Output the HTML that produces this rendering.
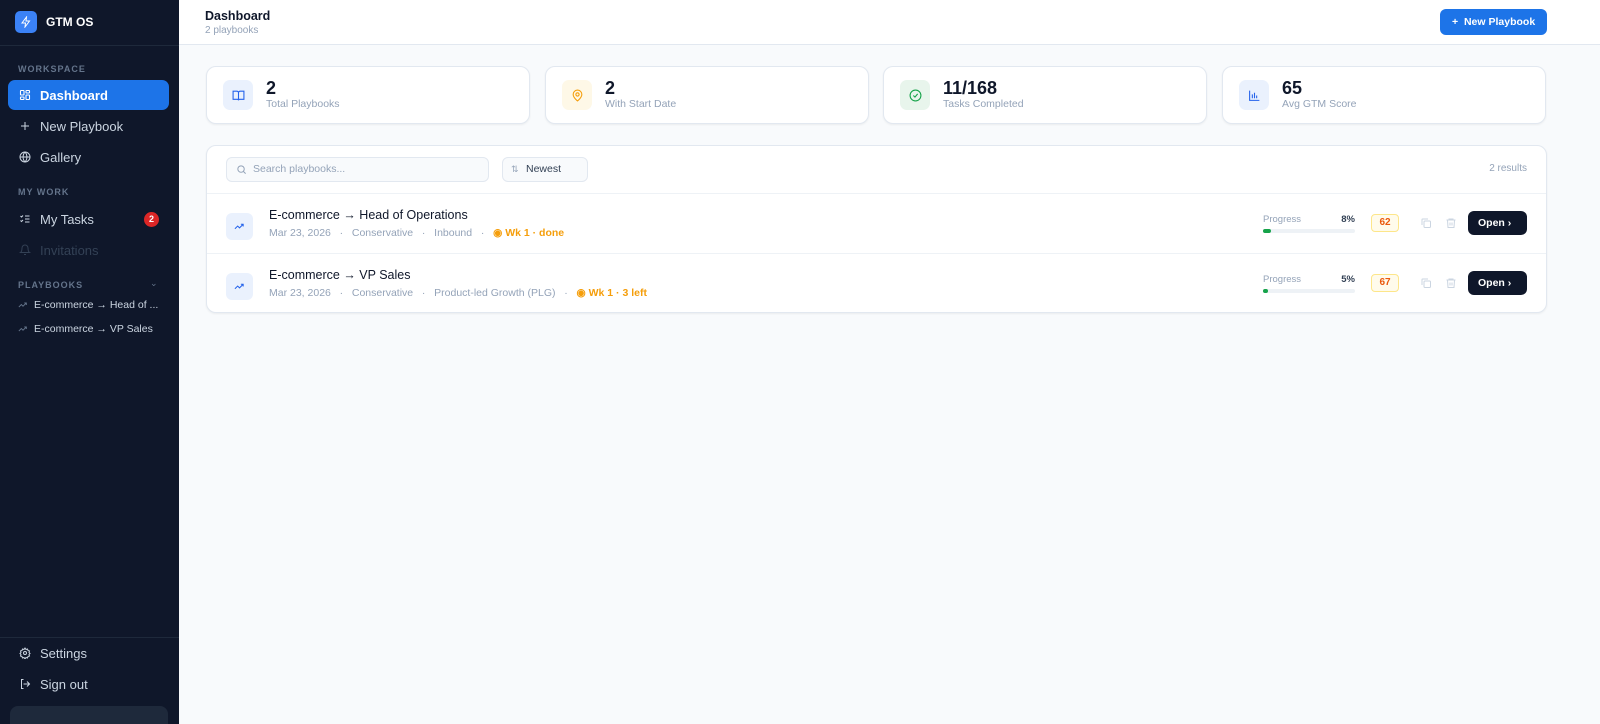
<!DOCTYPE html>
<html><head><meta charset="utf-8"><style>
*{box-sizing:border-box;margin:0;padding:0}
html,body{width:1600px;height:724px;overflow:hidden}
body{font-family:"Liberation Sans",sans-serif;background:#f8fafc;position:relative}
.sb{position:absolute;left:0;top:0;width:179px;height:724px;background:#0f172a;color:#cbd5e1;overflow:hidden}
.logo{position:absolute;left:15px;top:11px;width:22px;height:22px;border-radius:5px;background:#3b82f6;display:flex;align-items:center;justify-content:center}
.brand{position:absolute;left:46px;top:15px;font-size:12px;font-weight:bold;color:#fff}
.sec{position:absolute;left:18px;font-size:9px;font-weight:bold;letter-spacing:1px;color:#64748b}
.it{position:absolute;left:8px;width:161px;height:30px;border-radius:7px;display:flex;align-items:center;padding-left:11px;font-size:13px;color:#cbd5e1}
.it svg{margin-right:9px}
.act{background:#1d74e8;color:#fff;font-weight:bold}
.pb{position:absolute;left:18px;font-size:10.5px;color:#cbd5e1;display:flex;align-items:center}
.hdr{position:absolute;left:179px;top:0;right:0;height:45px;background:#fff;border-bottom:1px solid #e2e8f0}
.card{position:absolute;top:66px;height:58px;width:324px;background:#fff;border:1px solid #e2e8f0;border-radius:10px;box-shadow:0 1px 2px rgba(0,0,0,.06)}
.ic{position:absolute;left:16px;top:13px;width:30px;height:30px;border-radius:7px;display:flex;align-items:center;justify-content:center}
.num{position:absolute;left:59px;top:11px;font-size:18px;font-weight:bold;color:#0f172a}
.lbl{position:absolute;left:59px;top:31px;font-size:10.5px;color:#94a3b8}
.list{position:absolute;left:206px;top:145px;width:1341px;height:168px;background:#fff;border:1px solid #e2e8f0;border-radius:10px;box-shadow:0 1px 2px rgba(0,0,0,.06)}
.row{position:absolute;left:0;width:100%;height:60px;border-top:1px solid #eef2f6}
.ri{position:absolute;left:19px;top:19px;width:27px;height:27px;border-radius:6px;background:#eaf1fd;display:flex;align-items:center;justify-content:center}
.t{position:absolute;left:62px;top:14px;font-size:12.5px;color:#0f172a}
.m{position:absolute;left:62px;top:33px;font-size:10.5px;color:#94a3b8;white-space:pre}
.m b{color:#f59e0b}
.pg{position:absolute;left:1056px;top:20px;font-size:9.5px;color:#94a3b8;width:92px}
.pg span{position:absolute;right:0;color:#334155;font-weight:bold}
.bar{position:absolute;left:1056px;top:35px;width:92px;height:4px;border-radius:2px;background:#eef2f6}
.bar i{display:block;height:4px;border-radius:2px;background:#16a34a}
.sc{position:absolute;left:1164px;top:20px;width:28px;height:18px;border:1px solid #fde68a;background:#fffbeb;border-radius:4px;color:#ea580c;font-size:10px;font-weight:bold;text-align:center;line-height:16px}
.open{position:absolute;left:1261px;top:17px;width:59px;height:24px;border-radius:6px;background:#0f172a;color:#fff;font-size:10.5px;font-weight:bold;line-height:24px;padding-left:10px}
.cp{position:absolute;left:1213px;top:23px}
.tr{position:absolute;left:1238px;top:23px}
</style></head><body>
<div class="sb">
<div class="logo"><svg width="12" height="12" viewBox="0 0 24 24" fill="none" stroke="#fff" stroke-width="2"><path d="M13 2L4 14h7l-1 8 9-12h-7z"/></svg></div>
<div class="brand">GTM OS</div>
<div style="position:absolute;left:0;top:45px;width:179px;border-top:1px solid #1e293b"></div>
<div class="sec" style="top:64px">WORKSPACE</div>
<div class="it act" style="top:80px"><svg width="12" height="12" viewBox="0 0 24 24" fill="none" stroke="#fff" stroke-width="2.2"><rect x="3" y="3" width="7" height="9" rx="1"/><rect x="14" y="3" width="7" height="5" rx="1"/><rect x="14" y="12" width="7" height="9" rx="1"/><rect x="3" y="16" width="7" height="5" rx="1"/></svg>Dashboard</div>
<div class="it" style="top:111px"><svg width="12" height="12" viewBox="0 0 24 24" fill="none" stroke="#cbd5e1" stroke-width="2"><path d="M12 4v16M4 12h16"/></svg>New Playbook</div>
<div class="it" style="top:142px"><svg width="12" height="12" viewBox="0 0 24 24" fill="none" stroke="#cbd5e1" stroke-width="2"><circle cx="12" cy="12" r="10"/><path d="M2 12h20M12 2a15 15 0 010 20M12 2a15 15 0 000 20"/></svg>Gallery</div>
<div class="sec" style="top:187px">MY WORK</div>
<div class="it" style="top:204px"><svg width="12" height="12" viewBox="0 0 24 24" fill="none" stroke="#cbd5e1" stroke-width="2"><path d="M3 6l2 2 3-3M3 15l2 2 3-3M12 6h9M12 12h9M12 18h9"/></svg>My Tasks<span style="position:absolute;right:10px;width:15px;height:15px;border-radius:50%;background:#dc2626;color:#fff;font-size:9px;font-weight:bold;text-align:center;line-height:15px">2</span></div>
<div class="it" style="top:235px;color:#334155"><svg width="12" height="12" viewBox="0 0 24 24" fill="none" stroke="#334155" stroke-width="2"><path d="M6 8a6 6 0 0112 0c0 7 3 9 3 9H3s3-2 3-9M10 21h4"/></svg>Invitations</div>
<div class="sec" style="top:280px">PLAYBOOKS</div>
<div style="position:absolute;left:150px;top:278px;color:#64748b;font-size:9px">⌄</div>
<div class="pb" style="top:299px"><svg width="10" height="10" viewBox="0 0 24 24" fill="none" stroke="#64748b" stroke-width="2.2" style="margin-right:6px"><path d="M2 17l6-6 4 4 8-8M15 7h5v5"/></svg>E-commerce → Head of ...</div>
<div class="pb" style="top:323px"><svg width="10" height="10" viewBox="0 0 24 24" fill="none" stroke="#64748b" stroke-width="2.2" style="margin-right:6px"><path d="M2 17l6-6 4 4 8-8M15 7h5v5"/></svg>E-commerce → VP Sales</div>
<div style="position:absolute;left:0;top:637px;width:179px;border-top:1px solid #1e293b"></div>
<div class="it" style="top:638px"><svg width="12" height="12" viewBox="0 0 24 24" fill="none" stroke="#cbd5e1" stroke-width="2"><circle cx="12" cy="12" r="3"/><path d="M12 2l2 3 3-1 1 3 3 1-1 3 2 2-2 2 1 3-3 1-1 3-3-1-2 3-2-3-3 1-1-3-3-1 1-3-2-2 2-2-1-3 3-1 1-3 3 1z"/></svg>Settings</div>
<div class="it" style="top:669px"><svg width="12" height="12" viewBox="0 0 24 24" fill="none" stroke="#cbd5e1" stroke-width="2"><path d="M9 21H5V3h4M16 17l5-5-5-5M21 12H9"/></svg>Sign out</div>
<div style="position:absolute;left:10px;top:706px;width:158px;height:30px;border-radius:8px;background:#1e293b"></div>
</div>
<div class="hdr">
<div style="position:absolute;left:26px;top:9px;font-size:12.5px;font-weight:bold;color:#0f172a">Dashboard</div>
<div style="position:absolute;left:26px;top:25px;font-size:10px;color:#94a3b8">2 playbooks</div>
<div style="position:absolute;left:1261px;top:9px;width:107px;height:26px;border-radius:6px;background:#1d74e8;color:#fff;font-size:10.5px;font-weight:bold;line-height:26px;padding-left:12px">+&nbsp; New Playbook</div>
</div>
<div class="card" style="left:206px"><div class="ic" style="background:#eaf1fd"><svg width="13" height="13" viewBox="0 0 24 24" fill="none" stroke="#2563eb" stroke-width="2"><path d="M2 4h7a3 3 0 013 3v14a2 2 0 00-2-2H2zM22 4h-7a3 3 0 00-3 3v14a2 2 0 012-2h8z"/></svg></div><div class="num">2</div><div class="lbl">Total Playbooks</div></div>
<div class="card" style="left:545px"><div class="ic" style="background:#fef8e7"><svg width="13" height="13" viewBox="0 0 24 24" fill="none" stroke="#f59e0b" stroke-width="2"><path d="M20 10c0 6-8 12-8 12S4 16 4 10a8 8 0 0116 0z"/><circle cx="12" cy="10" r="3"/></svg></div><div class="num">2</div><div class="lbl">With Start Date</div></div>
<div class="card" style="left:883px"><div class="ic" style="background:#e8f5ec"><svg width="13" height="13" viewBox="0 0 24 24" fill="none" stroke="#16a34a" stroke-width="2"><circle cx="12" cy="12" r="10"/><path d="M8 12l3 3 5-6"/></svg></div><div class="num">11/168</div><div class="lbl">Tasks Completed</div></div>
<div class="card" style="left:1222px"><div class="ic" style="background:#eaf1fd"><svg width="13" height="13" viewBox="0 0 24 24" fill="none" stroke="#2563eb" stroke-width="2"><path d="M3 3v18h18M8 17V10M12 17V7M16 17v-5"/></svg></div><div class="num">65</div><div class="lbl">Avg GTM Score</div></div>
<div class="list">
<div style="position:absolute;left:19px;top:11px;width:263px;height:25px;border:1px solid #e2e8f0;border-radius:6px;background:#f8fafc;font-size:10.5px;color:#94a3b8;line-height:23px;padding-left:26px"><svg style="position:absolute;left:9px;top:6px" width="11" height="11" viewBox="0 0 24 24" fill="none" stroke="#94a3b8" stroke-width="2.2"><circle cx="11" cy="11" r="7"/><path d="M21 21l-5-5"/></svg>Search playbooks...</div>
<div style="position:absolute;left:295px;top:11px;width:86px;height:25px;border:1px solid #e2e8f0;border-radius:6px;background:#f8fafc;font-size:10.5px;color:#334155;line-height:23px;padding-left:23px"><span style="position:absolute;left:8px;color:#94a3b8;font-size:9px">⇅</span>Newest</div>
<div style="position:absolute;right:19px;top:17px;font-size:10px;color:#94a3b8">2 results</div>
<div class="row" style="top:47px">
<div class="ri"><svg width="11" height="11" viewBox="0 0 24 24" fill="none" stroke="#2563eb" stroke-width="2.2"><path d="M2 17l6-6 4 4 8-8M15 7h5v5"/></svg></div>
<div class="t">E-commerce → Head of Operations</div>
<div class="m">Mar 23, 2026   ·   Conservative   ·   Inbound   ·   <b>◉ Wk 1 · done</b></div>
<div class="pg">Progress<span>8%</span></div><div class="bar"><i style="width:8px"></i></div>
<div class="sc">62</div>
<svg class="cp" width="12" height="12" viewBox="0 0 24 24" fill="none" stroke="#cbd5e1" stroke-width="2"><rect x="8" y="8" width="13" height="13" rx="2"/><path d="M4 16V5a1 1 0 011-1h11"/></svg>
<svg class="tr" width="12" height="12" viewBox="0 0 24 24" fill="none" stroke="#cbd5e1" stroke-width="2"><path d="M3 6h18M8 6V4h8v2M5 6l1 15h12l1-15M10 11v6M14 11v6"/></svg>
<div class="open">Open ›</div>
</div>
<div class="row" style="top:107px">
<div class="ri"><svg width="11" height="11" viewBox="0 0 24 24" fill="none" stroke="#2563eb" stroke-width="2.2"><path d="M2 17l6-6 4 4 8-8M15 7h5v5"/></svg></div>
<div class="t">E-commerce → VP Sales</div>
<div class="m">Mar 23, 2026   ·   Conservative   ·   Product-led Growth (PLG)   ·   <b>◉ Wk 1 · 3 left</b></div>
<div class="pg">Progress<span>5%</span></div><div class="bar"><i style="width:5px"></i></div>
<div class="sc">67</div>
<svg class="cp" width="12" height="12" viewBox="0 0 24 24" fill="none" stroke="#cbd5e1" stroke-width="2"><rect x="8" y="8" width="13" height="13" rx="2"/><path d="M4 16V5a1 1 0 011-1h11"/></svg>
<svg class="tr" width="12" height="12" viewBox="0 0 24 24" fill="none" stroke="#cbd5e1" stroke-width="2"><path d="M3 6h18M8 6V4h8v2M5 6l1 15h12l1-15M10 11v6M14 11v6"/></svg>
<div class="open">Open ›</div>
</div>
</div>
</body></html>
